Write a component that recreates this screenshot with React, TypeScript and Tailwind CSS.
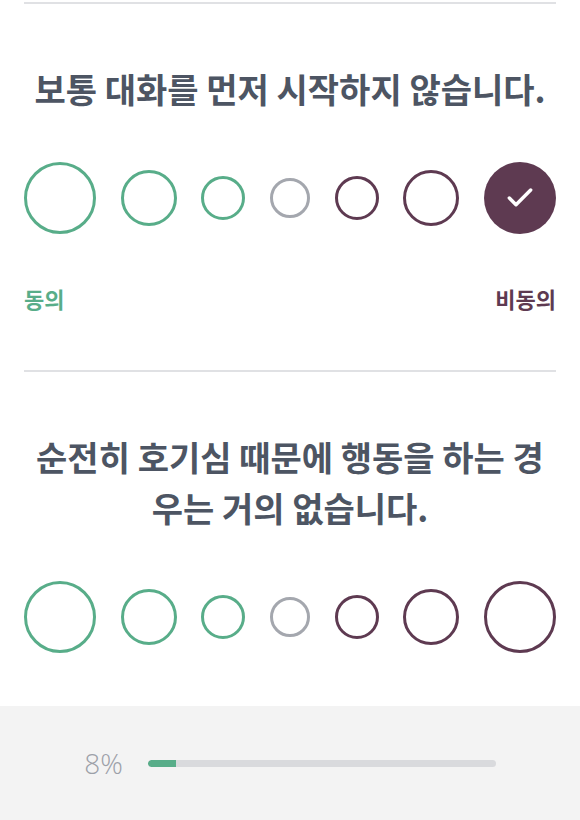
import { Check } from "lucide-react";

const GREEN = "border-[#58ad89]";
const PURPLE = "border-[#5e3a51]";

const options = [
  { size: "w-[72px] h-[72px]", color: GREEN },
  { size: "w-[56px] h-[56px]", color: GREEN },
  { size: "w-[44px] h-[44px]", color: GREEN },
  { size: "w-[40px] h-[40px]", color: "border-[#a4a7ae]" },
  { size: "w-[44px] h-[44px]", color: PURPLE },
  { size: "w-[56px] h-[56px]", color: PURPLE },
  { size: "w-[72px] h-[72px]", color: PURPLE },
];

function Question({ text, selected }: { text: React.ReactNode; selected?: number }) {
  return (
    <section>
      <div className="h-[2px] bg-[#e0e1e4]" />
      <h2 className="mt-[59px] text-center text-[34px] leading-[51px] font-bold text-[#4d5563]">
        {text}
      </h2>
      <div className="mt-[48px] flex items-center justify-between h-[72px]">
        {options.map((o, i) =>
          i === selected ? (
            <div
              key={i}
              className={`${o.size} rounded-full bg-[#5e3a51] flex items-center justify-center`}
            >
              <Check className="w-[32px] h-[32px] text-white" strokeWidth={2.6} />
            </div>
          ) : (
            <div key={i} className={`${o.size} rounded-full border-[3px] ${o.color} bg-white`} />
          )
        )}
      </div>
      <div className="mt-[51px] flex justify-between text-[22px] leading-[27px] font-bold">
        <span className="text-[#58ad89]">동의</span>
        <span className="text-[#5e3a51]">비동의</span>
      </div>
      <div className="h-[58px]" />
    </section>
  );
}

export default function App() {
  return (
    <div
      className="relative w-[580px] h-[820px] overflow-hidden bg-white"
      style={{ fontFamily: '"Noto Sans CJK KR", "Noto Sans", sans-serif' }}
    >
      <div className="px-6 pt-[2px]">
        <Question text="보통 대화를 먼저 시작하지 않습니다." selected={6} />
        <Question
          text={
            <>
              순전히 호기심 때문에 행동을 하는 경
              <br />
              우는 거의 없습니다.
            </>
          }
        />
      </div>

      {/* Progress footer */}
      <div className="absolute bottom-0 left-0 right-0 h-[114px] bg-[#f3f3f3] flex items-center justify-center gap-[25px]">
        <span
          className="text-[28px] font-light text-[#9ca0a8] leading-none"
          style={{ fontFamily: '"Open Sans", sans-serif' }}
        >
          8%
        </span>
        <div className="w-[348px] h-[7px] rounded-full bg-[#d9dadd] overflow-hidden">
          <div className="h-full bg-[#58ad89] rounded-l-full" style={{ width: "8%" }} />
        </div>
      </div>
    </div>
  );
}
